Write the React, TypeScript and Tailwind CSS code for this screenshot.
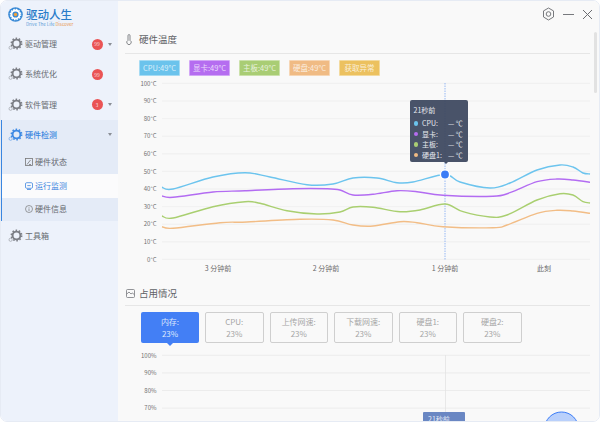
import type { ReactNode } from "react";

type Pt = [number, number];

const cpu: Pt[] = [[162,187.3],[173,189],[213,177],[245,172.7],[270,177],[307,184.7],[333,184],[353,178],[377,178],[397,182.7],[413,182],[445,174.5],[460,182],[490,188],[510,183],[537,170],[560,165],[573,167],[583,173],[590,174]];
const gpu: Pt[] = [[162,196],[173,197.3],[213,192],[245,190.7],[293,188.7],[327,188.7],[340,190],[353,195],[373,194.3],[397,190.7],[417,191.7],[443,195.3],[493,196.3],[510,192.7],[537,181.7],[557,179],[573,180],[590,182.3]];
const board: Pt[] = [[162,216],[173,218],[213,206.7],[245,201.7],[260,203.3],[287,210.7],[317,214],[340,212],[353,207],[373,207.3],[400,211.7],[420,210],[445,204],[463,211.7],[490,217],[507,215],[537,200],[560,193.7],[573,195],[583,201.7],[590,203]];
const disk: Pt[] = [[162,226.7],[173,228.3],[220,222.7],[247,222],[300,219.3],[333,220],[353,225],[373,226],[400,221.7],[417,222.7],[443,226.7],[493,227.7],[507,225],[537,213.3],[557,210.3],[573,211],[590,213.3]];

// catmull-rom to bezier so the lines come out smooth
function smooth(p: Pt[]) {
  let d = `M${p[0][0]} ${p[0][1]}`;
  for (let i = 0; i < p.length - 1; i++) {
    const a = p[i - 1] || p[i];
    const b = p[i];
    const c = p[i + 1];
    const e = p[i + 2] || c;
    const c1x = b[0] + (c[0] - a[0]) / 6;
    const c1y = b[1] + (c[1] - a[1]) / 6;
    const c2x = c[0] - (e[0] - b[0]) / 6;
    const c2y = c[1] - (e[1] - b[1]) / 6;
    d += ` C${c1x.toFixed(1)} ${c1y.toFixed(1)} ${c2x.toFixed(1)} ${c2y.toFixed(1)} ${c[0]} ${c[1]}`;
  }
  return d;
}

function Gear({ color = "#7c7f86" }: { color?: string }) {
  return (
    <svg width="15" height="14" viewBox="0 0 15 14" fill="none" className="shrink-0">
      <circle cx="2.6" cy="10.8" r="1.6" stroke={color} strokeOpacity="0.45" strokeWidth="1" />
      <circle cx="8.5" cy="6.5" r="3.9" stroke={color} strokeWidth="1.9" />
      <circle cx="8.5" cy="6.5" r="5.2" stroke={color} strokeWidth="1.5" strokeDasharray="1.6 1.67" />
    </svg>
  );
}

function NavItem({ label, badge, caret }: { label: string; badge?: string; caret?: boolean }) {
  return (
    <div className="flex h-[30.33px] items-center pl-[8px] text-[8px] text-[#666a70]">
      <Gear />
      <span className="ml-[2px]">{label}</span>
      {badge && (
        <span className="absolute left-[91.5px] flex h-[11px] w-[11px] items-center justify-center rounded-full bg-[#ea5455] text-[5px] text-[#f8dcdc]">
          {badge}
        </span>
      )}
      {caret && <span className="absolute left-[108px] h-0 w-0 border-x-[2.5px] border-t-[3px] border-x-transparent border-t-[#8b8f96]" />}
    </div>
  );
}

function SubItem({ label, icon, active, className }: { label: string; icon: ReactNode; active?: boolean; className: string }) {
  return (
    <div className={`flex items-center gap-[2px] pl-[23px] text-[8px] ${active ? "bg-[#fbfbfc] text-[#3f86e0]" : "text-[#666a70]"} ${className}`}>
      {icon}
      <span>{label}</span>
    </div>
  );
}

function Sidebar() {
  return (
    <aside className="relative w-[118px] shrink-0 bg-[#edf2fb]">
      <div className="flex h-[29px] items-center pl-[8px]">
        <svg width="15" height="15" viewBox="0 0 15 15">
          <circle cx="7.5" cy="7.5" r="7.3" fill="#3a8ad6" />
          <circle cx="7.5" cy="7.5" r="4" fill="none" stroke="#fff" strokeWidth="1.8" />
          <circle cx="7.5" cy="7.5" r="5.2" fill="none" stroke="#fff" strokeWidth="1.2" strokeDasharray="1.5 1.2" />
          <circle cx="7.5" cy="7.5" r="1.7" fill="#f0a23c" />
        </svg>
        <div className="mt-[4px] ml-[3px] flex flex-col">
          <span className="text-[11.5px] leading-[13px] font-medium text-[#2a7cc9]">驱动人生</span>
          <span className="mt-[1px] text-[4.5px] leading-[4px] whitespace-nowrap text-[#5a9ad6]">
            Drive The Life <span className="text-[#e8954a]">Discover</span>
          </span>
        </div>
      </div>
      <NavItem label="驱动管理" badge="99" caret />
      <NavItem label="系统优化" badge="99" />
      <NavItem label="软件管理" badge="3" caret />
      <div className="h-[101px] border-l-2 border-[#3a86e0] bg-[#e4ebf7]">
        <div className="-ml-[2px] flex h-[30px] items-center pl-[8px] text-[8px] font-medium text-[#3a86e0]">
          <Gear color="#3f8ae4" />
          <span className="ml-[2px]">硬件检测</span>
          <span className="absolute left-[108px] h-0 w-0 border-x-[2.5px] border-t-[3px] border-x-transparent border-t-[#8b8f96]" />
        </div>
        <SubItem
          className="h-[24px]"
          label="硬件状态"
          icon={
            <svg width="8" height="8" viewBox="0 0 8 8" fill="none" stroke="#777" strokeWidth="0.8">
              <rect x="0.5" y="0.5" width="7" height="7" />
              <path d="M2 6.5 5.5 2M4 6.5h2" />
            </svg>
          }
        />
        <SubItem
          active
          className="h-[24px]"
          label="运行监测"
          icon={
            <svg width="8" height="8" viewBox="0 0 8 8" fill="none" stroke="#3f86e0" strokeWidth="0.8">
              <rect x="0.5" y="0.7" width="7" height="5.6" rx="1.2" />
              <path d="M2.3 3.6h3.4M2 7.5h4" />
            </svg>
          }
        />
        <SubItem
          className="h-[23px]"
          label="硬件信息"
          icon={
            <svg width="8" height="8" viewBox="0 0 8 8" fill="none" stroke="#777" strokeWidth="0.7">
              <circle cx="4" cy="4" r="3.5" />
              <path d="M4 3.4v2.6M4 2v.7" />
            </svg>
          }
        />
      </div>
      <NavItem label="工具箱" />
    </aside>
  );
}

function SectionTitle({ icon, title, className }: { icon: ReactNode; title: string; className: string }) {
  return (
    <div className={`mr-[10px] ml-[7px] flex items-center border-b border-[#e6e6e6] pl-[1px] text-[9.5px] text-[#5f6266] ${className}`}>
      <span className="flex w-[13px] items-center">{icon}</span>
      <span>{title}</span>
    </div>
  );
}

const tags = [
  { label: "CPU:49°C", cls: "bg-[#6bc3ec]" },
  { label: "显卡:49°C", cls: "bg-[#b56df0]" },
  { label: "主板:49°C", cls: "bg-[#a9cd74]" },
  { label: "硬盘:49°C", cls: "bg-[#f0bb84]" },
  { label: "获取异常", cls: "bg-[#ecc15f]" },
];

const cards = ["CPU:", "上传网速:", "下载网速:", "硬盘1:", "硬盘2:"];

function TempChart() {
  const rows = [100, 90, 80, 70, 60, 50, 40, 30, 20, 10, 0];
  return (
    <svg width="482" height="200" viewBox="118 78 482 200" className="block">
      {rows.map((v, i) => (
        <g key={v}>
          <line x1="162" x2="590" y1={83.4 + i * 17.6} y2={83.4 + i * 17.6} stroke="#eeeeee" strokeWidth="0.8" />
          <text x="156.5" y={85.6 + i * 17.6} textAnchor="end" fontSize="6" fill="#707070">{v}°C</text>
        </g>
      ))}
      <line x1="445" x2="445" y1="83" y2="260" stroke="#7fa8f2" strokeWidth="0.8" strokeDasharray="1.5 1" />
      <path d={smooth(disk)} fill="none" stroke="#f2bd86" strokeWidth="1.4" />
      <path d={smooth(board)} fill="none" stroke="#a9cf70" strokeWidth="1.4" />
      <path d={smooth(gpu)} fill="none" stroke="#b36cf2" strokeWidth="1.4" />
      <path d={smooth(cpu)} fill="none" stroke="#6cc4ee" strokeWidth="1.4" />
      <circle cx="445" cy="174.5" r="4.6" fill="#3b7cf6" stroke="#ffffff" strokeWidth="1.4" />
      <g fontSize="7" fill="#6a6a6a" textAnchor="middle">
        <text x="218" y="270.5">3 分钟前</text>
        <text x="326" y="270.5">2 分钟前</text>
        <text x="445" y="270.5">1 分钟前</text>
        <text x="544" y="270.5">此刻</text>
      </g>
    </svg>
  );
}

function TempTooltip() {
  const rows = [
    { name: "CPU:", dot: "bg-[#6bc3ec]" },
    { name: "显卡:", dot: "bg-[#b56df0]" },
    { name: "主板:", dot: "bg-[#a9cd74]" },
    { name: "硬盘1:", dot: "bg-[#f0bb84]" },
  ];
  return (
    <div className="absolute top-[22px] left-[292px] h-[62px] w-[58px] rounded-[2px] bg-[#3f4a61]/95 px-[3.5px] pt-[5px] text-[7px] leading-[10.5px] text-[#e8eaef]">
      <div className="mb-[2.5px]">21秒前</div>
      {rows.map((r) => (
        <div key={r.name} className="flex items-center">
          <span className={`mr-[4px] h-[4.5px] w-[4.5px] rounded-full ${r.dot}`} />
          <span className="w-[26px]">{r.name}</span>
          <span>— ℃</span>
        </div>
      ))}
      <span className="absolute top-[62px] left-[33.5px] h-0 w-0 border-x-[2px] border-t-[2px] border-x-transparent border-t-[#454f66]" />
    </div>
  );
}

function UsageChart() {
  const rows = [100, 90, 80, 70];
  return (
    <svg width="482" height="75" viewBox="118 347 482 75" className="block">
      {rows.map((v, i) => (
        <g key={v}>
          <line x1="162" x2="590" y1={355.3 + i * 17.6} y2={355.3 + i * 17.6} stroke="#e9e9e9" strokeWidth="0.8" />
          <text x="156.5" y={357.6 + i * 17.6} textAnchor="end" fontSize="6" fill="#707070">{v}%</text>
        </g>
      ))}
      <line x1="445.5" x2="445.5" y1="355" y2="422" stroke="#e3e3e3" strokeWidth="0.8" />
      <circle cx="561.5" cy="429" r="17" fill="#b9d0fb" stroke="#3b7cf6" strokeWidth="1" />
    </svg>
  );
}

export default function App() {
  return (
    <div className="h-[422px] w-[600px] overflow-hidden bg-white font-['Noto_Sans_CJK_SC','Noto_Sans',sans-serif]">
      <div className="flex h-full overflow-hidden rounded-[7px] border border-[#e6ebf4]">
        <div className="-m-px flex h-[422px] w-[600px] shrink-0">
          <Sidebar />
          <main className="relative h-[422px] w-[482px] overflow-hidden bg-[#f9f9f9]">
            <div className="absolute top-[7px] right-[7px] flex items-center gap-[8px]">
              <svg width="13" height="14" viewBox="0 0 13 14" fill="none" stroke="#77797d" strokeWidth="1">
                <path d="M6.5 1 11.5 3.9V10L6.5 13 1.5 10V3.9Z" />
                <circle cx="6.5" cy="7" r="2.3" />
              </svg>
              <span className="h-px w-[11px] bg-[#77797d]" />
              <svg width="11" height="11" viewBox="0 0 11 11" fill="none" stroke="#6b6d71" strokeWidth="1">
                <path d="M1 1 10 10M10 1 1 10" />
              </svg>
            </div>
            <div className="absolute top-[32px] right-[3px] h-[61px] w-[3px] rounded-full bg-[#e2e2e2]" />

            <SectionTitle
              className="h-[54px] pt-[26px]"
              title="硬件温度"
              icon={
                <svg width="6" height="11" viewBox="0 0 6 11" fill="none" stroke="#77797d" strokeWidth="0.9">
                  <path d="M2 6.4V1.6a1 1 0 0 1 2 0v4.8a2.2 2.2 0 1 1-2 0Z" />
                </svg>
              }
            />
            <div className="mt-[6px] flex h-[16px] gap-[9px] pl-[21px]">
              {tags.map((t) => (
                <span key={t.label} className={`flex w-[41px] items-center justify-center rounded-[1px] border border-white/40 text-[7.5px] text-white/75 ${t.cls}`}>
                  {t.label}
                </span>
              ))}
            </div>
            <div className="relative mt-[2px]">
              <TempChart />
              <TempTooltip />
            </div>

            <SectionTitle
              className="h-[28px] pt-[3px]"
              title="占用情况"
              icon={
                <svg width="9" height="9" viewBox="0 0 9 9" fill="none" stroke="#77797d" strokeWidth="0.8">
                  <rect x="0.5" y="0.5" width="8" height="8" rx="1" />
                  <path d="M0.8 5 3 3l2 2 1.2-1 2 1.4" />
                </svg>
              }
            />
            <div className="mt-[6px] flex gap-[6px] pl-[23px]">
              <div className="relative flex h-[31px] w-[58px] flex-col items-center justify-center rounded-[2px] bg-[#437ff5] text-[8px] leading-[12px] text-[#dde8fd]">
                <span>内存:</span>
                <span>23%</span>
                <span className="absolute top-[31px] h-0 w-0 border-x-[3px] border-t-[3px] border-x-transparent border-t-[#437ff5]" />
              </div>
              {cards.map((c) => (
                <div key={c} className="flex h-[31px] w-[58.5px] flex-col items-center justify-center rounded-[2px] border border-[#cfcfcf] text-[8px] leading-[12px] text-[#a6a6a6]">
                  <span>{c}</span>
                  <span>23%</span>
                </div>
              ))}
            </div>
            <div className="relative mt-[4px]">
              <UsageChart />
              <div className="absolute top-[65px] left-[305px] h-[20px] w-[42px] rounded-[1px] bg-[#6a87c3] pt-[2px] pl-[5px] text-[7px] text-[#e8edf8]">21秒前</div>
            </div>
          </main>
        </div>
      </div>
    </div>
  );
}
